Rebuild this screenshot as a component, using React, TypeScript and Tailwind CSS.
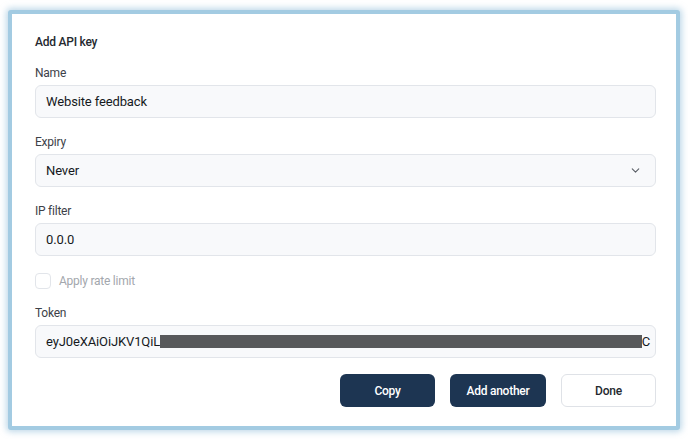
import { ChevronDown } from 'lucide-react';

const font = { fontFamily: 'Roboto, "Noto Sans", sans-serif' };

function Field({ label, children }: { label: string; children: React.ReactNode }) {
  return (
    <div className="flex flex-col">
      <label className="h-4 text-[12px] leading-4 tracking-[-0.02em] text-[#3d4148]">{label}</label>
      <div className="mt-1">{children}</div>
    </div>
  );
}

const boxClass =
  "flex items-center h-[33px] w-full pl-[10px] pr-[10px] rounded-md border border-[#e2e5ea] bg-[#f8f9fb] text-[13px] tracking-[-0.01em] text-[#16191d]";

export default function App() {
  return (
    <div className="w-[688px] h-[439px] bg-white pt-[10px] pl-[8px]" style={font}>
      <div className="w-[672px] h-[420px] border-4 border-[#a3cbe2] rounded-[3px] bg-white shadow-[0_0_6px_2px_rgba(140,185,215,0.55)] pt-[20px] pl-[23px] pr-[20px] flex flex-col">
        <h1 className="h-4 text-[12px] leading-4 font-medium tracking-[-0.02em] text-[#25292f]">Add API key</h1>

        <div className="mt-[15px]">
          <Field label="Name">
            <div className={boxClass}>Website feedback</div>
          </Field>
        </div>

        <div className="mt-4">
          <Field label="Expiry">
            <div className={`${boxClass} justify-between`}>
              <span>Never</span>
              <ChevronDown size={13} strokeWidth={2} className="text-[#5a5f66] mr-[3px]" />
            </div>
          </Field>
        </div>

        <div className="mt-4">
          <Field label="IP filter">
            <div className={boxClass}>0.0.0</div>
          </Field>
        </div>

        <div className="mt-[17px] flex items-center gap-2 h-4">
          <div className="w-4 h-4 rounded-[4px] border border-[#e2e5ea] bg-white" />
          <span className="text-[12px] tracking-[-0.02em] text-[#a3a7ad]">Apply rate limit</span>
        </div>

        <div className="mt-4">
          <Field label="Token">
            <div className={`${boxClass} !pr-[5px]`}>
              <span>eyJ0eXAiOiJKV1QiL</span>
              <span className="inline-block h-[13px] flex-1 bg-[#58595b]" />
              <span>C</span>
            </div>
          </Field>
        </div>

        <div className="mt-4 flex justify-end gap-[15px]">
          <button className="w-[95px] h-[33px] rounded-md bg-[#1d3552] text-white text-[12px] font-medium tracking-[-0.02em]">Copy</button>
          <button className="w-[96px] h-[33px] rounded-md bg-[#1d3552] text-white text-[12px] font-medium tracking-[-0.02em]">Add another</button>
          <button className="w-[95px] h-[33px] rounded-md border border-[#dfe2e7] bg-white text-[#25292f] text-[12px] font-medium tracking-[-0.02em]">Done</button>
        </div>
      </div>
    </div>
  );
}
